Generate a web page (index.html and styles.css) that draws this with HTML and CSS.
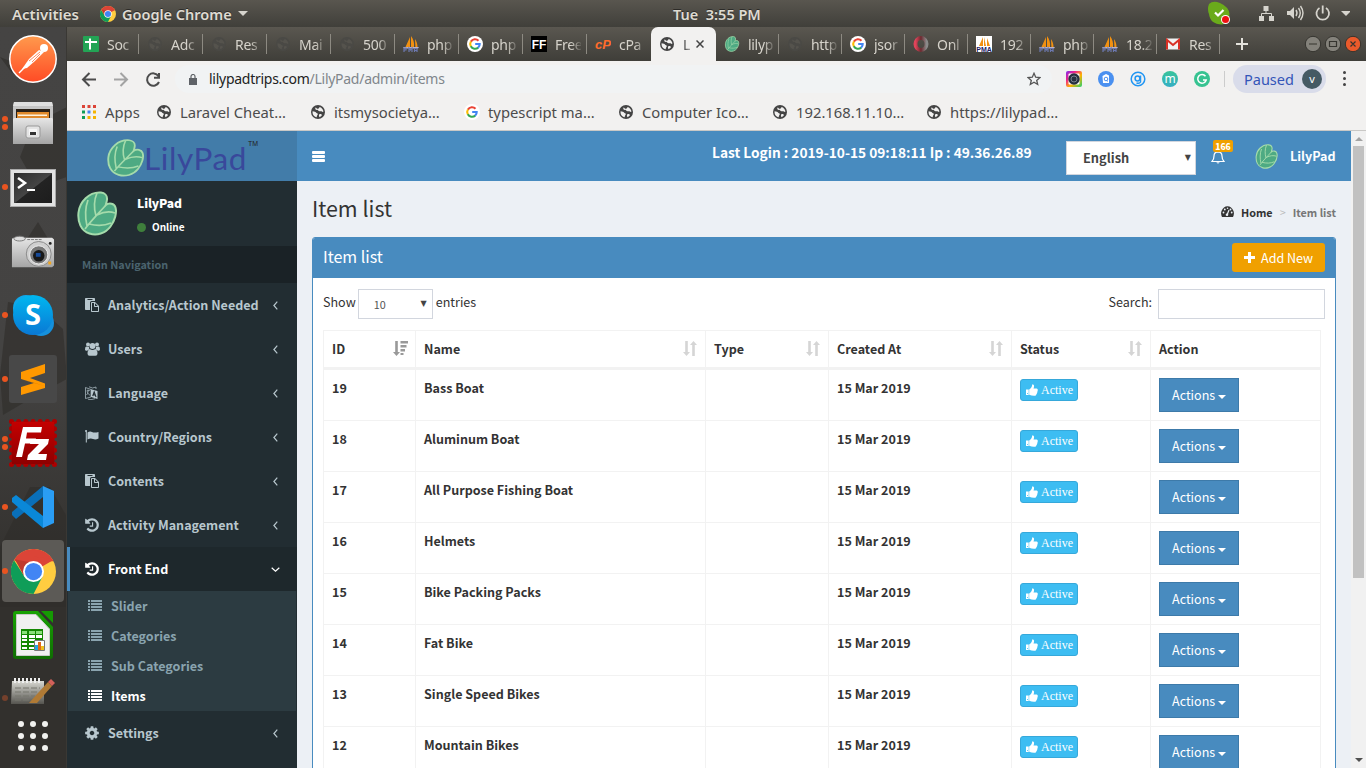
FILE: index.html
```html
<!DOCTYPE html>
<html lang="en">
<head>
<meta charset="utf-8">
<title>LilyPad | Item list</title>
<link rel="stylesheet" href="styles.css">
</head>
<body>
<svg class="defs" width="0" height="0">
  <defs>
    <linearGradient id="gPost" x2="0" y2="1"><stop stop-color="#ff9a4d"/><stop offset="1" stop-color="#ff4b25"/></linearGradient>
    <linearGradient id="gSky" x2="0" y2="1"><stop stop-color="#00b7f0"/><stop offset="1" stop-color="#0a78d4"/></linearGradient>
    <linearGradient id="gFz" x2="0" y2="1"><stop stop-color="#c40000"/><stop offset="1" stop-color="#8e0000"/></linearGradient>
    <linearGradient id="gMetal" x2="0" y2="1"><stop stop-color="#e6e6e6"/><stop offset="1" stop-color="#a5a5a5"/></linearGradient>
    <linearGradient id="gTerm" x2="1" y2="1"><stop stop-color="#2b2b2b"/><stop offset=".5" stop-color="#454545"/><stop offset=".52" stop-color="#232323"/><stop offset="1" stop-color="#1d1d1d"/></linearGradient>
    <linearGradient id="gLo" x2="0" y2="1"><stop stop-color="#18a303"/><stop offset="1" stop-color="#0f6d02"/></linearGradient>
    <linearGradient id="gNote" x2="0" y2="1"><stop stop-color="#d8d8d2"/><stop offset="1" stop-color="#55544f"/></linearGradient>
    <linearGradient id="gRing" x2="1"><stop stop-color="#e0445a"/><stop offset=".5" stop-color="#6b2a30"/><stop offset="1" stop-color="#8a8a8a"/></linearGradient>
    <linearGradient id="gCam" x2="1" y2="1"><stop stop-color="#7a2ff0"/><stop offset=".3" stop-color="#f0208c"/><stop offset=".6" stop-color="#ffb400"/><stop offset="1" stop-color="#20d070"/></linearGradient>
    <linearGradient id="gM" x2="0" y2="1"><stop stop-color="#38c49a"/><stop offset="1" stop-color="#35aec4"/></linearGradient>
  </defs>
  <symbol id="chrome" viewBox="0 0 48 48">
    <circle cx="24" cy="24" r="24" fill="#ffcd40"/>
    <path d="M24 24 3.2 12A24 24 0 0 1 44.8 12Z" fill="#db4437"/><path d="M24 13h21.3l-1-2L24 8Z" fill="#db4437"/>
    <path d="M3.2 12A24 24 0 0 0 24 48L33.5 29.5 24 24 14.5 29.5Z" fill="#0f9d58"/>
    <path d="M4 11 14 29 20 14Z" fill="#c13a2e"/>
    <circle cx="24" cy="24" r="11.2" fill="#fff"/><circle cx="24" cy="24" r="9.2" fill="#4285f4"/>
  </symbol>
  <symbol id="globe" viewBox="0 0 14 14">
    <circle cx="7" cy="7" r="7"/>
    <path d="M1.6 6.2c1.7.2 3 .4 3.4 1.3.4.9 1.8.5 1.8 1.6s-1 1.4-1.1 3.1C3 11.700 1.200 9.300 1.600 6.200ZM4.500 2.400c1.300.3 1 1.400 2.400 1.300 1.200 0 1-1.100 1.900-1.800 2 .8 3.600 2.800 3.600 4.900-1.100.5-1.500-.7-2.700-.6-1.400.1-2 .2-2.500-.6-.5-.9-1.300-.3-2-.8-.8-.5-1.200-1.300-.7-2.400ZM8.200 9.400c.8-.8 2.300-.3 2.900.7-.6 1.100-1.500 1.800-2.600 2.200-.4-1-.9-2.200-.3-2.900Z" class="cut"/>
  </symbol>
  <symbol id="google" viewBox="0 0 16 16">
    <circle cx="8" cy="8" r="8" fill="#fff"/>
    <g fill="none" stroke-width="2.100"><path d="M3.900 5.600A4.800 4.800 0 0 1 11.500 4.700" stroke="#ea4335"/><path d="M3.900 5.500A4.800 4.800 0 0 0 3.900 10.500" stroke="#fbbc05"/><path d="M3.800 10.300A4.800 4.800 0 0 0 11.200 11.600" stroke="#34a853"/><path d="M11.100 11.700A4.800 4.800 0 0 0 12.700 8H8.200" stroke="#4285f4"/></g>
  </symbol>
  <symbol id="leaf" viewBox="0 0 40 45">
    <path d="M24 1.500c3.500.5 6.500 3 6 7-.2 2.500-1 4-1.200 5.500 3.500-2.500 8.500-1.500 9.700 2.500 1.500 5-.5 13-5 19-5 7-14 9.500-21 7C4 40 .5 31 1.500 21.500 2.600 11 12 .5 24 1.500Z" fill="#4eaa83" stroke="#a5dbab" stroke-width="2"/>
    <path d="M8 38C13 31 20 24 29 14M10 35C8 26 8 17 11 9M19 25C17 18 17 9 20 2M12 33c8 2 15 2 22-1M20 24c6-3 12-4 18-2" fill="none" stroke="#a5dbab" stroke-width="1.700"/>
  </symbol>
  <symbol id="pma" viewBox="0 0 16 16">
    <path d="M7 1 2.500 11H7ZM8 0c2.500 3 3.500 7 3 11H8ZM12 3c1.800 2.500 2.500 5.500 2.500 8H12.400Z" fill="#f29111"/><path d="M0 11h16l-1 1.500H1Z" fill="#b9b3c9"/>
    <path d="M1 16v-4h2v2H1M6 16v-4l1.500 2L9 12v4M11.500 16v-3.500h2.500V16m-2.500-1.500H14" fill="none" stroke="#6c78af" stroke-width="1.200"/>
  </symbol>
  <symbol id="history" viewBox="0 0 1792 1792"><path d="M1664 896q0 156-61 298t-164 245-245 164-298 61q-172 0-327-72.500t-264-204.500q-7-10-6.500-22.500t8.500-20.500l137-138q10-9 25-9 16 2 23 12 73 95 179 147t225 52q104 0 198.500-40.500t163.500-109.500 109.500-163.500 40.500-198.500-40.500-198.500-109.500-163.500-163.500-109.500-198.500-40.500q-98 0-188 35.500t-160 101.500l137 138q31 30 14 69-17 40-59 40h-448q-26 0-45-19t-19-45v-448q0-42 40-59 39-17 69 14l130 129q107-101 244.500-156.500t284.500-55.500q156 0 298 61t245 164 164 245 61 298zm-640-288v448q0 14-9 23t-23 9h-320q-14 0-23-9t-9-23v-64q0-14 9-23t23-9h224v-352q0-14 9-23t23-9h64q14 0 23 9t9 23z"/></symbol>
  <symbol id="cog" viewBox="0 0 1792 1792"><path d="M1152 896q0-106-75-181t-181-75-181 75-75 181 75 181 181 75 181-75 75-181zm512-109v222q0 12-8 23t-20 13l-185 28q-19 54-39 91 35 50 107 138 10 12 10 25t-9 23q-27 37-99 108t-94 71q-12 0-26-9l-138-108q-44 23-91 38-16 136-29 186-7 28-36 28h-222q-14 0-24.500-8.500t-11.500-21.500l-28-184q-49-16-90-37l-141 107q-10 9-25 9-14 0-25-11-126-114-165-168-7-10-7-23 0-12 8-23 15-21 51-66.500t54-70.500q-27-50-41-99l-183-27q-13-2-21-12.500t-8-23.500v-222q0-12 8-23t19-13l186-28q14-46 39-92-40-57-107-138-10-12-10-24 0-10 9-23 26-36 98.500-107.500t94.500-71.500q13 0 26 10l138 107q44-23 91-38 16-136 29-186 7-28 36-28h222q14 0 24.500 8.500t11.500 21.500l28 184q49 16 90 37l142-107q9-9 24-9 13 0 25 10 129 119 165 170 7 8 7 22 0 12-8 23-15 21-51 66.500t-54 70.500q26 50 41 98l183 28q13 2 21 12.500t8 23.500z"/></symbol>
  <symbol id="paste" viewBox="0 0 14 14"><path d="M0 .8Q0 0 .8 0h8.400q.8 0 .8.800V3H6.500Q5 3 5 4.500V12H.8Q0 12 0 11.200ZM2.500 1v1h5V1Z" fill-rule="evenodd"/><path d="M6 4.800Q6 4 6.800 4H10l4 4v5.200q0 .8-.8.800H6.800Q6 14 6 13.200ZM7 5v8h6V9H9.800Q9 9 9 8.200V5Zm3 .3V8h2.700Z" fill-rule="evenodd"/></symbol>
  <symbol id="users" viewBox="0 0 15 14"><circle cx="3" cy="2.500" r="2"/><circle cx="12" cy="2.500" r="2"/><circle cx="7.500" cy="4" r="3"/><path d="M0 7.500Q0 4.500 1.300 4.500L4 5Q4 7 4.800 7.500 3 7.500 2.300 8.700H1Q0 8.600 0 7.500ZM15 7.500Q15 4.500 13.700 4.500L11 5Q11 7 10.200 7.500 12 7.500 12.700 8.700H14Q15 8.600 15 7.500ZM2.500 11.500Q2.500 7.500 5 7.200q2.500 1.500 5 0 2.500.3 2.500 4.300 0 2.300-2 2.300h-6Q2.500 13.800 2.500 11.500Z"/></symbol>
  <symbol id="lang" viewBox="0 0 13 14"><path d="M.5 1.500 6 3.500V11L.5 12.500ZM4 .8 7.500 2 11 1v2" fill="none" stroke="currentColor" stroke-width=".7"/><path d="M6 3.200 12.500 5v8L6 11Z"/><path d="M1.500 5 4.800 4.500M3 3.500V5Q3 8 1.500 9M2 6.500 5 9.300M3 13.200l3 .5 4-1" fill="none" stroke="currentColor" stroke-width=".7"/><path d="M7.700 10 9.200 5.800 11 11M8.200 8.600l2.300.5" fill="none" stroke="#222d32" stroke-width="1.100"/></symbol>
  <symbol id="flag" viewBox="0 0 14 13"><path d="M.3 1.200a1 1 0 1 1 1.500 0V12H.8V1.500ZM2.500 2Q5 .5 7 1.500t6.500 0V8Q10.500 9.700 8 8.500T2.500 9Z"/></symbol>
  <symbol id="list" viewBox="0 0 14 11"><path d="M0 0h2v2H0ZM3 0h11v2H3ZM0 3h2v2H0ZM3 3h11v2H3ZM0 6h2v2H0ZM3 6h11v2H3ZM0 9h2v2H0ZM3 9h11v2H3Z"/></symbol>
  <symbol id="chev" viewBox="0 0 5 9"><path d="M4.300.7.900 4.500l3.400 3.800" fill="none" stroke="currentColor" stroke-width="1.200"/></symbol>
  <symbol id="sort" viewBox="0 0 14 15"><path d="M2.200 0h2.600v11H7L3.500 15 0 11H2.200ZM9.200 15h2.600V4H14L10.500 0 7 4H9.200Z"/></symbol>
  <symbol id="sortdesc" viewBox="0 0 15 15"><path d="M2.200 0h2.600v11H7L3.500 15 0 11H2.200ZM7.500 0H15V2.500H7.500ZM7.500 4H13.500V6.500H7.500ZM7.500 8H12V10.500H7.500ZM7.500 12H10.500V14H7.500Z"/></symbol>
  <symbol id="thumb" viewBox="0 0 12 12"><path d="M0 5.500h2.700V11H0ZM3.200 5.500 5 4Q6 2.800 6.200.8 6.400 0 7.200.4 8.500 1 8 3L7.500 4.500h3.200Q12 4.700 11.700 5.800 11.900 6.800 11.400 7.400 11.600 8.300 11 9 11 10 10.300 10.400 10.200 11.600 8.800 11.700 6 11.900 3.200 10.800Z"/><path d="M1 9h.8v.9H1Z" fill="#3dbdf2"/></symbol>
</svg>

<header class="panel">
  <span class="act">Activities</span>
  <svg class="pchrome"><use href="#chrome"/></svg>
  <span class="app">Google Chrome</span><i class="tri"></i>
  <span class="clock">Tue&nbsp; 3:55 PM</span>
  <svg class="tray" viewBox="0 0 150 27">
    <path d="M9 4Q13 0 20 3q9 4 9.500 11Q29 22 22 24.500 10 24 9 14Q7 9 9 4Z" fill="#6aab1b"/><path d="m15 12.500 3 3 5.500-5.500" fill="none" stroke="#fff" stroke-width="2.200"/><circle cx="25.500" cy="19.500" r="4.500" fill="#fff"/><circle cx="25.500" cy="19.500" r="3.500" fill="#e11"/>
    <g fill="#d6d4cd"><path d="M63.500 6h5v5h-5ZM59 16h5v5h-5ZM69 16h5v5h-5Z"/><path d="M66 11v2.500M61.500 16v-2.500h10V16" fill="none" stroke="#d6d4cd"/>
    <path d="M87 11h3l4-4v12l-4-4h-3Z"/><path d="M96 10q2 3 0 6M98.500 8q3.500 5 0 10M100.500 6q5 7 0 14" fill="none" stroke="#d6d4cd" stroke-width="1.400"/>
    <path d="M119.500 8a6.300 6.300 0 1 0 6.500 0M122.700 5.500v8" fill="none" stroke="#d6d4cd" stroke-width="1.800"/><path d="M141 11h10l-5 5Z"/></g>
  </svg>
</header>

<div class="desk">
<aside class="dock">
  <svg class="wall" viewBox="0 0 67 741"><path d="M20 130 33 97 67 80v70l-30 10ZM0 30l20 8-8 8ZM25 215 38 195l12 20-6 8ZM8 275l30 5 25 22 4 50-30 16-34 20-3-40ZM30 460h20l17 30v90H0v-60Z" fill="#2f2d29" opacity=".6"/></svg>
  <div class="slot"><svg width="48" height="48" viewBox="0 0 48 48"><circle cx="24" cy="24" r="23.200" fill="url(#gPost)" stroke="#fff" stroke-width="1.500"/><path d="M13 34 20 24 30 15l5 2-9 9-8 7Z" fill="#fff"/><circle cx="35" cy="13" r="4" fill="#fff"/><path d="m20 26 11-9M23 27l8-8M11 37l7-7" stroke="#ff7038" stroke-width=".8"/><path d="m10 38 10-10" stroke="#fff" stroke-width="1.500"/></svg></div>
  <div class="slot"><i class="dot up"></i><i class="dot dn"></i><svg width="42" height="44" viewBox="0 0 42 44"><path d="M2 1h38l1 5v12H1V6Z" fill="#c4c4c4"/><path d="M2 1h38l1 4H1Z" fill="#dedede"/><path d="M4 8h34v10H4Z" fill="#2a2118"/><path d="M5 11h32v7H5Z" fill="#e08a2c"/><path d="M6 13.500h29v1.500H6Z" fill="#fff2dc"/><path d="M2 17h38l1 1v25H1V18Z" fill="url(#gMetal)"/><rect x="14" y="25" width="14" height="12" rx="2" fill="#e4e4e4" stroke="#999"/><path d="M17 28h8v6h-8Z" fill="#f6f6f6"/><path d="M18 31h6v3h-6Z" fill="#333"/></svg></div>
  <div class="slot"><i class="dot"></i><svg class="term" width="46" height="38" viewBox="0 0 46 38"><rect x=".5" y=".5" width="45" height="37" fill="#e2e2e2" stroke="#aaa"/><path d="M4 4h38v30H4Z" fill="url(#gTerm)"/><path d="m8 9 7 5-7 5" fill="none" stroke="#fff" stroke-width="2.500"/><path d="M17 21h8" stroke="#fff" stroke-width="2"/></svg></div>
  <div class="slot"><svg class="term" width="44" height="34" viewBox="0 0 46 34"><path d="M1 4Q1 2 3 2h40l2 2v27l-2 2H1Z" fill="url(#gMetal)"/><ellipse cx="9" cy="3" rx="6" ry="2.500" fill="#ddd" stroke="#777"/><path d="M17 4h16" stroke="#777" stroke-dasharray="3 1"/><circle cx="29" cy="19" r="13" fill="#cfcfcf" stroke="#888"/><circle cx="29" cy="20" r="9.500" fill="#777" stroke="#eee"/><circle cx="29" cy="21" r="6" fill="#181818"/><path d="M26 18h5v4h-5Z" fill="#174a98"/><path d="M39 27h3v3h-3Z" fill="#f3a61d"/><circle cx="41" cy="8" r="1.500" fill="#222"/></svg></div>
  <div class="slot"><i class="dot"></i><svg width="44" height="44" viewBox="0 0 44 44"><circle cx="15" cy="15" r="13" fill="#10a8ea"/><circle cx="30" cy="30" r="13" fill="#1590dc"/><circle cx="22" cy="22" r="20" fill="url(#gSky)"/><text x="22" y="32" class="sky">S</text></svg></div>
  <div class="slot"><i class="dot"></i><div class="subl"><svg width="24" height="33" viewBox="0 0 24 33"><path d="M0 9 24 1v9L9 15l15 5.500V25L0 32v-8l13-4L0 16Z" fill="#ff9800"/><path d="M0 16.500 24 23 14 20Z" fill="#c87500"/></svg></div></div>
  <div class="slot"><i class="dot up"></i><i class="dot dn"></i><svg width="48" height="48" viewBox="0 0 48 48"><rect x="2.500" y="2.500" width="43" height="43" fill="url(#gFz)" stroke="#ad0000" stroke-width="5" stroke-linecap="round" stroke-dasharray="0 7.170"/><rect x="3" y="3" width="42" height="42" fill="url(#gFz)"/><path d="M14 8h19l-1 5.500H18l-1 6h10l-1 5H16l-3 13.500H7Z" fill="#fff"/><path d="M22 20h18l-1 5-10 10h9l-1 6H18l1-5 11-11H21Z" fill="#fff"/></svg></div>
  <div class="slot"><i class="dot"></i><svg width="44" height="44" viewBox="0 0 44 44"><path d="M32 1 43 6v32l-11 5Z" fill="#2a9df4"/><path d="M32 1v11L5 34 1 30v-3Z" fill="#0a6fb8"/><path d="M32 43V31L5 10l-4 3v4Z" fill="#0a88d8"/></svg></div>
  <div class="slot"><i class="dot"></i><div class="cur"><svg width="45" height="45"><use href="#chrome"/></svg></div></div>
  <div class="slot"><svg width="40" height="48" viewBox="0 0 40 48"><path d="M3 0h22l15 16v29q0 3-3 3H3q-3 0-3-3V3Q0 0 3 0Z" fill="url(#gLo)"/><path d="M28 0h12v12Z" fill="#159a03"/><path d="M3.500 3.500H23L36.500 18v26.500h-33Z" fill="#f0f0f0" stroke="#c9c9c9"/><path d="M8 18h22v21H8Z" fill="#148703"/><path d="M9 20h5v3H9ZM16 20h6v3H16ZM23 20h6v3H23Z" fill="#8be07c"/><path d="M9 24h5v3H9ZM16 24h6v3H16ZM23 24h6v3H23ZM9 28h5v2H9ZM16 28h6v2H16ZM9 32h5v2H9ZM16 32h5v2H16ZM9 36h5v2H9ZM16 36h5v2H16Z" fill="#fff"/><path d="M21.500 29.500h10v10h-10Z" fill="#fff" stroke="#777"/><path d="M22 34h3v5h-3Z" fill="#2aa4e0"/><path d="M25 31h3v8h-3Z" fill="#e06a1c"/><path d="M28 35h3v4h-3Z" fill="#f0c020"/></svg></div>
  <div class="slot note"><i class="dot"></i><svg width="46" height="26" viewBox="0 0 46 26"><path d="M2 3h32v23H1Z" fill="url(#gNote)"/><path d="M5 0v5M9 0v5M13 0v5M17 0v5M21 0v5M25 0v5M29 0v5" stroke="#eee" stroke-width="2"/><path d="M5 10h25M5 14h22M5 18h20M5 22h16" stroke="#77766f" stroke-dasharray="6 2"/><path d="m38 4 4 4-15 17h-8Z" fill="#b07a35"/><path d="m38 4 3-3 4 4-3 3Z" fill="#d2605a"/></svg></div>
  <div class="apps"><i></i><i></i><i></i><i></i><i></i><i></i><i></i><i></i><i></i></div>
</aside>

<div class="browser">
  <div class="tabs">
    <div class="tab"><svg viewBox="0 0 16 16"><rect width="16" height="16" rx="1" fill="#23a455"/><path d="M2 6h12M7 2.500v11" stroke="#fff" stroke-width="2"/></svg><span>Soc</span></div>
    <div class="tab"><svg class="dim" viewBox="0 0 14 14"><use href="#globe"/></svg><span>Adc</span></div>
    <div class="tab"><svg class="dim" viewBox="0 0 14 14"><use href="#globe"/></svg><span>Res</span></div>
    <div class="tab"><svg class="dim" viewBox="0 0 14 14"><use href="#globe"/></svg><span>Mai</span></div>
    <div class="tab"><svg class="dim" viewBox="0 0 14 14"><use href="#globe"/></svg><span>500</span></div>
    <div class="tab"><svg><use href="#pma"/></svg><span>php</span></div>
    <div class="tab"><svg><use href="#google"/></svg><span>php</span></div>
    <div class="tab"><svg viewBox="0 0 16 16"><path d="M0 0h16v16H0Z"/><text x="8" y="13" class="ff">FF</text></svg><span>Free</span></div>
    <div class="tab nosep"><svg viewBox="0 0 16 16"><text x="8" y="12.500" class="cp">cP</text></svg><span>cPa</span></div>
    <div class="tab on"><svg class="g14" viewBox="0 0 14 14"><use href="#globe"/></svg><span>L</span><svg class="x" viewBox="0 0 8 8"><path d="m.5.5 7 7m0-7-7 7" stroke="#444" stroke-width="1.500"/></svg></div>
    <div class="tab b"><svg><use href="#leaf"/></svg><span>lilyp</span></div>
    <div class="tab b"><svg class="dim" viewBox="0 0 14 14"><use href="#globe"/></svg><span>http</span></div>
    <div class="tab b"><svg><use href="#google"/></svg><span>jsor</span></div>
    <div class="tab b"><svg viewBox="0 0 16 16"><ellipse cx="8" cy="8" rx="5.500" ry="6" fill="none" stroke="url(#gRing)" stroke-width="4"/></svg><span>Onl</span></div>
    <div class="tab b"><svg viewBox="0 0 16 16"><path d="M0 0h16v16H0Z" fill="#fff"/><path d="M7 1 3 10h4ZM8 1l2 9H8ZM11 2l3 8h-3Z" fill="#f29111"/><text x="8" y="16" class="pm">PMA</text></svg><span>192</span></div>
    <div class="tab b"><svg><use href="#pma"/></svg><span>php</span></div>
    <div class="tab b"><svg><use href="#pma"/></svg><span>18.2</span></div>
    <div class="tab b"><svg viewBox="0 0 16 16"><path d="M1 2.500h14v11H1Z" fill="#f2f2f2"/><path d="M2 13.500V4l6 5 6-5v9.500" fill="none" stroke="#d93025" stroke-width="2"/></svg><span>Res</span></div>
    <svg class="wctl" viewBox="0 0 147 34"><path d="M17 17h12M23 11v12" stroke="#e4e2dc" stroke-width="2"/><g stroke="#35342f"><circle cx="94" cy="17" r="7.700" fill="#84827b"/><circle cx="114" cy="17" r="7.700" fill="#84827b"/><circle cx="134" cy="17" r="7.700" fill="#ea5a2b"/><path d="M90 17h8M110.500 14.500h7v5h-7ZM131.500 14.500l5 5m0-5-5 5" fill="none" stroke-width="1.200"/></g></svg>
  </div>

  <div class="bar">
    <svg class="nav" viewBox="0 0 108 34" fill="none" stroke-width="2"><path d="M29 17.500H16.500m6-6.500L16 17.500l6.500 6.500" stroke="#4c4c4c"/><path d="M47 17.500h12.500m-6-6.500 6.500 6.500-6.500 6.500" stroke="#a3a3a3"/><path d="M91.500 14.200A6.200 6.200 0 1 0 92 20M92 11v4.800H87" stroke="#4c4c4c"/></svg>
    <div class="omni"><svg class="lock" viewBox="0 0 8 11"><path d="M0 4h8v7H0Z" fill="#5f6368"/><path d="M2 4V2.500a2 2 0 0 1 4 0V4" fill="none" stroke="#5f6368" stroke-width="1.200"/></svg><span class="url"><b>lilypadtrips.com</b>/LilyPad/admin/items</span>
      <svg class="star" viewBox="0 0 14 14"><path d="m7 1.300 1.700 3.900 4.200.4-3.200 2.800 1 4.100L7 10.300l-3.700 2.200 1-4.100L1.100 5.600l4.200-.4Z" fill="none" stroke="#555" stroke-width="1.300"/></svg></div>
    <div class="exts">
      <svg viewBox="0 0 16 16"><rect width="16" height="16" rx="2" fill="url(#gCam)"/><rect x="2.500" y="2.500" width="11" height="11" rx="1" fill="#fff"/><circle cx="8" cy="8" r="5.700" fill="#263040"/><circle cx="8" cy="8" r="3" fill="none" stroke="#78828f"/></svg>
      <svg viewBox="0 0 16 16"><circle cx="8" cy="8" r="8" fill="#4a90f0"/><path d="M4.500 5 8 3l3 1.500V12H5Z" fill="#fff"/><circle cx="8" cy="8" r="1.800" fill="none" stroke="#4a90f0"/><path d="m8.500 9 1 1.500" stroke="#4a90f0"/></svg>
      <svg viewBox="0 0 16 16"><g fill="none" stroke="#2196f3" stroke-width="1.500"><circle cx="8" cy="8" r="6.800"/><circle cx="7.500" cy="7.500" r="2.400"/><path d="M10.500 4.500V11q-1 2-4 1"/></g></svg>
      <svg viewBox="0 0 16 16"><circle cx="8" cy="8" r="8" fill="url(#gM)"/><text x="8" y="11.500" class="em">m</text></svg>
      <svg viewBox="0 0 16 16"><circle cx="8" cy="8" r="8" fill="#37c391"/><path d="M11.500 5.300A4.300 4.300 0 1 0 12.200 9H9" fill="none" stroke="#fff" stroke-width="1.500"/></svg>
    </div>
    <div class="paused">Paused<i>v</i></div>
    <div class="kebab"><i></i><i></i><i></i></div>
  </div>

  <div class="marks">
    <span style="width:75px"><svg viewBox="0 0 14 14"><path d="M0 0h3v3H0ZM5.500 0h3v3h-3ZM11 0h3v3h-3Z" fill="#db4437"/><path d="M0 5.500h3v3H0Z" fill="#0f9d58"/><path d="M5.500 5.500h3v3h-3Z" fill="#4285f4"/><path d="M11 5.500h3v3h-3ZM5.500 11h3v3h-3ZM11 11h3v3h-3Z" fill="#f4b400"/><path d="M0 11h3v3H0Z" fill="#0f9d58"/></svg><em class="wa">Apps</em></span>
    <span><svg><use href="#globe"/></svg><em>Laravel Cheat…</em></span>
    <span><svg><use href="#globe"/></svg><em>itsmysocietya…</em></span>
    <span><svg class="gg"><use href="#google"/></svg><em>typescript ma…</em></span>
    <span><svg><use href="#globe"/></svg><em>Computer Ico…</em></span>
    <span><svg><use href="#globe"/></svg><em>192.168.11.10…</em></span>
    <span><svg><use href="#globe"/></svg><em>https://lilypad…</em></span>
  </div>

  <div class="page">
    <nav class="side">
      <div class="logo"><svg class="lf" viewBox="0 0 40 45" preserveAspectRatio="none"><use href="#leaf"/></svg><span>LilyPad</span><sup>TM</sup></div>
      <div class="user"><svg width="40" height="45"><use href="#leaf"/></svg><div><strong>LilyPad</strong><small><i></i>Online</small></div></div>
      <div class="head">Main Navigation</div>
      <a class="item"><svg><use href="#paste"/></svg><span>Analytics/Action Needed</span><svg class="ch"><use href="#chev"/></svg></a>
      <a class="item"><svg class="w15"><use href="#users"/></svg><span>Users</span><svg class="ch"><use href="#chev"/></svg></a>
      <a class="item"><svg class="w13"><use href="#lang"/></svg><span>Language</span><svg class="ch"><use href="#chev"/></svg></a>
      <a class="item"><svg><use href="#flag"/></svg><span>Country/Regions</span><svg class="ch"><use href="#chev"/></svg></a>
      <a class="item"><svg><use href="#paste"/></svg><span>Contents</span><svg class="ch"><use href="#chev"/></svg></a>
      <a class="item"><svg class="fa"><use href="#history"/></svg><span>Activity Management</span><svg class="ch"><use href="#chev"/></svg></a>
      <a class="item on"><svg class="fa"><use href="#history"/></svg><span>Front End</span><svg class="ch dn"><use href="#chev"/></svg></a>
      <div class="sub">
        <a><svg><use href="#list"/></svg><span>Slider</span></a>
        <a><svg><use href="#list"/></svg><span>Categories</span></a>
        <a><svg><use href="#list"/></svg><span>Sub Categories</span></a>
        <a class="on"><svg><use href="#list"/></svg><span>Items</span></a>
      </div>
      <a class="item"><svg class="fa"><use href="#cog"/></svg><span>Settings</span><svg class="ch"><use href="#chev"/></svg></a>
    </nav>

    <main class="main">
      <div class="top">
        <div class="burger"><i></i><i></i><i></i></div>
        <span class="login">Last Login : 2019-10-15 09:18:11 Ip : 49.36.26.89</span>
        <div class="lang">English<i>▼</i></div>
        <div class="bell"><svg viewBox="0 0 14 14"><path d="M1 11.500Q3 9.500 3 6 3 2 7 1.800 11 2 11 6q0 3.500 2 5.500Z" fill="none" stroke="#fff" stroke-width="1.200"/><path d="M5.500 12Q7 14.500 8.500 12M7 .5V2" stroke="#fff" fill="none"/></svg><b>166</b></div>
        <svg class="av"><use href="#leaf"/></svg><span class="me">LilyPad</span>
      </div>
      <div class="crumbs"><h1>Item list</h1><svg viewBox="0 0 13 11"><path d="M1 11Q-.5 8 .5 5 2.500.3 6.500.3T12.500 5q1 3-.5 6Z" fill="#333"/><path d="m6 9 2-5" stroke="#ecf0f5" stroke-width="1.200"/><g fill="#ecf0f5"><circle cx="2.500" cy="6.500" r=".9"/><circle cx="3.800" cy="3.500" r=".9"/><circle cx="6.500" cy="2.200" r=".8"/><circle cx="9.500" cy="3.500" r=".9"/><circle cx="10.700" cy="6.500" r=".9"/><circle cx="6" cy="8.700" r="1.300"/></g></svg><b>Home</b><i>&gt;</i><span>Item list</span></div>
      <section class="box">
        <div class="bh"><h3>Item list</h3><button><svg viewBox="0 0 11 11"><path d="M4 0h3v4h4v3H7v4H4V7H0V4h4Z"/></svg><span>Add New</span></button></div>
        <div class="bb">
          <div class="ctl"><span>Show</span><div class="sel">10<i>▼</i></div><span>entries</span><span class="se">Search:</span><input type="text"></div>
          <div class="grid">
            <div class="r th"><b>ID<svg class="d"><use href="#sortdesc"/></svg></b><b>Name<svg><use href="#sort"/></svg></b><b>Type<svg><use href="#sort"/></svg></b><b>Created At<svg><use href="#sort"/></svg></b><b>Status<svg><use href="#sort"/></svg></b><b>Action</b></div>
            <div class="r"><b>19</b><b>Bass Boat</b><b></b><b>15 Mar 2019</b><div><span class="ok"><svg><use href="#thumb"/></svg>Active</span></div><div><span class="ac">Actions<i></i></span></div></div>
            <div class="r"><b>18</b><b>Aluminum Boat</b><b></b><b>15 Mar 2019</b><div><span class="ok"><svg><use href="#thumb"/></svg>Active</span></div><div><span class="ac">Actions<i></i></span></div></div>
            <div class="r"><b>17</b><b>All Purpose Fishing Boat</b><b></b><b>15 Mar 2019</b><div><span class="ok"><svg><use href="#thumb"/></svg>Active</span></div><div><span class="ac">Actions<i></i></span></div></div>
            <div class="r"><b>16</b><b>Helmets</b><b></b><b>15 Mar 2019</b><div><span class="ok"><svg><use href="#thumb"/></svg>Active</span></div><div><span class="ac">Actions<i></i></span></div></div>
            <div class="r"><b>15</b><b>Bike Packing Packs</b><b></b><b>15 Mar 2019</b><div><span class="ok"><svg><use href="#thumb"/></svg>Active</span></div><div><span class="ac">Actions<i></i></span></div></div>
            <div class="r"><b>14</b><b>Fat Bike</b><b></b><b>15 Mar 2019</b><div><span class="ok"><svg><use href="#thumb"/></svg>Active</span></div><div><span class="ac">Actions<i></i></span></div></div>
            <div class="r"><b>13</b><b>Single Speed Bikes</b><b></b><b>15 Mar 2019</b><div><span class="ok"><svg><use href="#thumb"/></svg>Active</span></div><div><span class="ac">Actions<i></i></span></div></div>
            <div class="r"><b>12</b><b>Mountain Bikes</b><b></b><b>15 Mar 2019</b><div><span class="ok"><svg><use href="#thumb"/></svg>Active</span></div><div><span class="ac">Actions<i></i></span></div></div>
          </div>
        </div>
      </section>
    </main>
    <div class="scroll"><i class="u"></i><div></div><i class="d"></i></div>
  </div>
</div>
</div>
</body>
</html>
```
FILE: styles.css
```css
* { box-sizing: border-box; }
body { margin: 0; width: 1366px; height: 768px; overflow: hidden; background: #33312d; font-family: "Noto Sans CJK SC", "Noto Sans", sans-serif; font-size: 12.550px; color: #333; }
svg { flex: none; display: block; }
i, em { font-style: normal; }
.defs { position: absolute; }

.panel { height: 27px; display: flex; align-items: center; background: linear-gradient(#59564f, #403f3a); color: #dfdbd2; font: 600 14.500px "Noto Sans", sans-serif; position: relative; text-shadow: 0 -1px 0 #2c2b28; }
.act { margin-left: 12px; width: 88px; white-space: nowrap; font-size: 15px; }
.pchrome { width: 16px; height: 16px; }
.app { margin-left: 6px; width: 111px; white-space: nowrap; }
.tri { margin-left: 5px; border: 5px solid transparent; border-top-color: #d6d4cd; border-bottom: 0; }
.clock { margin-left: 425px; white-space: nowrap; width: 90px; }
.tray { width: 150px; height: 27px; margin-left: auto; margin-right: 16px; }

.desk { display: flex; height: 741px; }
.dock { width: 67px; position: relative; background: linear-gradient(#454443, #444342 45%, #32302d 75%); display: flex; flex-direction: column; overflow: hidden; border-right: 1px solid #3a3834; }
.wall { position: absolute; left: 0; top: 0; width: 67px; height: 741px; }
.slot { height: 64px; display: flex; align-items: center; justify-content: center; position: relative; }
.term { margin-top: 2px; }
.dot { position: absolute; left: 2px; top: 29px; width: 6px; height: 6px; border-radius: 50%; background: #e95420; }
.dot.up { top: 25px; } .dot.dn { top: 33px; }
.sky { font: bold 29px "Open Sans", sans-serif; fill: #fff; text-anchor: middle; }
.subl { width: 48px; height: 48px; background: #484848; border-radius: 3px; display: flex; align-items: center; justify-content: center; }
.cur { width: 62px; height: 62px; border-radius: 4px; background: #5c5a56; display: flex; align-items: center; justify-content: center; }
.note { height: 37px; padding-top: 11px; }
.note .dot { top: 28px; background: #74402c; }
.apps { display: grid; grid-template-columns: repeat(3, 6px); gap: 6px; padding: 17px 0 0 18px; }
.apps i { width: 6px; height: 6px; border-radius: 50%; background: #f2f2f0; }

.browser { flex: 1; min-width: 0; }
.tabs { height: 34px; display: flex; background: linear-gradient(#5a5750, #3f3e39); padding-left: 8px; font: 14px "Noto Sans", sans-serif; color: #d6d3cb; }
.tab { width: 64px; height: 34px; padding: 0 5px 0 8px; display: flex; align-items: center; position: relative; flex: none; }
.tab::after { content: ""; position: absolute; right: 0; top: 7px; height: 20px; width: 1px; background: #8d8a82; }
.tab.nosep::after, .tab.on::after { display: none; }
.tab.b { width: 63px; }
.tab svg { width: 16px; height: 16px; }
.tab span { margin-left: 8px; white-space: nowrap; width: 26px; letter-spacing: -.3px; -webkit-mask-image: linear-gradient(90deg, #000 60%, rgba(0,0,0,.15)); }
.tab svg.dim { fill: #4a4945; --cut: #55534d; width: 14px; height: 14px; margin: 0 1px; }
.cut { fill: var(--cut, #f2f1f0); }
.tab.on { width: 65px; background: #f2f1f0; border-radius: 7px 7px 0 0; color: #333; padding-left: 9px; }
.tab.on svg { width: 14px; height: 14px; fill: #444; }
.tab.on span { width: 8px; margin-left: 9px; -webkit-mask-image: linear-gradient(90deg, #000, rgba(0,0,0,.3)); }
.tab.on svg.x { width: 8px; height: 8px; margin-left: 5px; }
.ff { font: bold 12px "Liberation Sans"; fill: #fff; text-anchor: middle; }
.cp { font: italic bold 13px "Liberation Sans"; fill: #ff6c2c; text-anchor: middle; }
.pm { font: bold 7px "Liberation Sans"; fill: #226; text-anchor: middle; }
.wctl { width: 147px; height: 34px; margin-left: -1px; }

.bar { height: 35px; background: #f2f1f0; display: flex; align-items: center; font-family: "Noto Sans", sans-serif; }
.nav { width: 108px; height: 34px; }
.omni { width: 877px; height: 28px; border-radius: 14px; background: #f1f3f4; display: flex; align-items: center; margin-top: 1px; padding: 0 11px 0 14px; }
.lock { width: 8px; height: 11px; }
.url { margin: -2px 0 0 12px; font-size: 14px; color: #80868b; letter-spacing: -.27px; }
.url b { font-weight: 400; color: #222; }
.star { width: 14px; height: 14px; margin-left: auto; }
.exts { display: flex; gap: 16px; margin-left: 14px; }
.exts svg { width: 16px; height: 16px; }
.em { font: 12px "Noto Sans"; fill: #fff; text-anchor: middle; }
.paused { margin-left: 23px; width: 93px; height: 28px; border-radius: 14px; background: #d9dcea; color: #3355b8; font-size: 14.500px; line-height: 26px; display: flex; align-items: center; justify-content: space-between; padding: 0 4px 0 11px; position: relative; }
.paused::before { content: ""; position: absolute; left: -9px; top: 6px; height: 16px; width: 1px; background: #ccc; }
.paused i { width: 20px; height: 20px; border-radius: 50%; background: #455a64; color: #fff; font-size: 11px; line-height: 19px; text-align: center; }
.kebab { display: grid; gap: 3px; margin-left: 17px; }
.kebab i { width: 3px; height: 3px; border-radius: 50%; background: #444; }

.marks { height: 35px; background: #f2f1f0; border-bottom: 1px solid #c9c8c6; display: flex; align-items: center; padding: 0 0 2px 15px; font: 14.800px "Noto Sans", sans-serif; color: #4c4c4c; }
.marks span { width: 154px; display: flex; align-items: center; }
.marks svg { width: 14px; height: 14px; fill: #444; margin-right: 9px; }
.marks svg.gg { width: 16px; height: 16px; margin: 0 8px 0 -1px; }
.marks em { white-space: nowrap; margin-top: -1px; }

.page { height: 637px; display: flex; overflow: hidden; background: #ecf0f5; }
.side { width: 230px; background: #222d32; color: #b8c7ce; font-weight: 700; }
.logo { height: 50px; background: #427ca9; display: flex; align-items: center; padding-left: 40px; }
.lf { width: 37px; height: 38px; margin-top: 4px; }
.logo span { font: 400 31.500px Lato, sans-serif; color: #39489b; letter-spacing: .6px; margin-top: 4px; width: 104px; }
.logo sup { font: 7px "Liberation Sans"; color: #222; margin: -26px 0 0 0; }
.user { height: 65px; display: flex; padding: 10px; color: #fff; }
.user div { margin-left: 20px; }
.user strong { display: block; line-height: 24px; font-size: 12.100px; letter-spacing: -.1px; }
.user small { display: flex; align-items: center; font-size: 10px; line-height: 24px; }
.user small i { width: 9px; height: 9px; border-radius: 50%; background: #3f7f3c; margin-right: 6px; }
.head { height: 37px; line-height: 36px; background: #1a2226; color: #4b646f; font-size: 10.800px; padding-left: 15px; }
.item { height: 44px; display: flex; align-items: center; padding: 0 18px; }
.item svg { width: 14px; height: 14px; fill: currentColor; }
.item svg.w15 { width: 15px; } .item svg.w13 { width: 13px; }
.item svg.fa { width: 16px; height: 16px; margin: 0 -1px; }
.item svg + span { margin: -2px 0 0 9px; }
.item svg.w15 + span { margin-left: 8px; } .item svg.w13 + span { margin-left: 10px; }
.item svg.ch { width: 5px; height: 9px; margin: 0 1px 0 auto; }
.item svg.dn { transform: rotate(-90deg); margin-right: 1px; }
.item.on { background: #1e282c; color: #fff; border-left: 3px solid #488bbf; padding-left: 15px; }
.sub { background: #2c3b41; margin: 0 1px; color: #8aa4af; }
.sub a { height: 30px; display: flex; align-items: center; padding-left: 20px; }
.sub a span { margin-top: -2px; }
.sub .on { color: #fff; }
.sub svg { width: 14px; height: 11px; fill: currentColor; margin: -1px 9px 0 0; }

.main { flex: 1; min-width: 0; }
.top { height: 50px; background: #488bbf; display: flex; color: #fff; font-weight: 700; padding-left: 15px; }
.burger { display: grid; gap: 1px; align-content: start; padding-top: 20px; width: 13px; }
.burger i { height: 3px; background: #fff; border-radius: 1px; }
.login { margin-left: 387px; width: 354px; line-height: 43px; white-space: nowrap; font-size: 13.700px; }
.lang { width: 130px; height: 34px; margin-top: 10px; background: #fff; border: 1px solid #d2d6de; color: #444; padding: 0 4px 0 16px; line-height: 31px; display: flex; justify-content: space-between; font-size: 12.800px; }
.lang i, .sel i { font: 8px/31px "DejaVu Sans"; color: #444; }
.bell { position: relative; margin: 19px 0 0 15px; width: 14px; }
.bell svg { width: 14px; height: 14px; }
.bell b { position: absolute; left: 2px; top: -10px; background: #f0a000; font-size: 8.500px; line-height: 12px; width: 20px; height: 12px; text-align: center; border-radius: 2px; }
.av { width: 25px; height: 25px; margin: 13px 0 0 29px; }
.me { margin-left: 11px; line-height: 49px; }
.crumbs { height: 56px; display: flex; align-items: center; padding: 5px 15px 0; font-size: 10.800px; }
.crumbs h1 { margin: -9px auto 0 0; font-weight: 400; font-size: 21.400px; }
.crumbs svg { width: 13px; height: 11px; margin-right: 7px; }
.crumbs i { color: #bbb; margin: 0 7px; }
.crumbs span { color: #777; font-weight: 700; }
.box { margin: 0 15px; border: 1px solid #488bbf; border-radius: 3px 3px 0 0; background: #fff; height: 560px; overflow: hidden; }
.bh { height: 40px; background: #488bbf; color: #fff; display: flex; align-items: center; justify-content: space-between; padding: 0 10px 1px; }
.bh h3 { margin: -3px 0 0; font-size: 16px; font-weight: 400; }
.bh button { width: 93px; height: 29px; border: 0; border-radius: 3px; background: #f0a000; color: #fff; font: inherit; display: flex; align-items: center; padding: 0 0 0 12px; margin-top: -1px; }
.bh button svg { width: 11px; height: 11px; fill: #fff; margin-right: 6px; }
.bb { padding: 11px 10px; }
.ctl { display: flex; height: 30px; line-height: 25px; }
.sel { width: 75px; height: 30px; border: 1px solid #d2d6de; margin: 0 3px 0 2px; padding: 0 5px 0 15px; font-size: 10.800px; line-height: 29px; display: flex; justify-content: space-between; color: #555; }
.sel i { line-height: 27px; }
.se { margin-left: auto; }
.ctl input { width: 167px; height: 30px; border: 1px solid #d2d6de; margin-left: 6px; background: #fff; }
.grid { width: 998px; margin-top: 11px; border-left: 1px solid #f2f2f2; border-top: 1px solid #f2f2f2; }
.r { display: grid; grid-template-columns: 92px 290px 123px 183px 139px 170px; height: 51px; }
.r > * { border-right: 1px solid #f2f2f2; border-bottom: 1px solid #f2f2f2; padding: 8px 8px 0; line-height: 20px; }
.r.th { height: 39px; }
.r.th > * { border-bottom-width: 3px; line-height: 20px; display: flex; justify-content: space-between; }
.th svg { width: 14px; height: 15px; fill: #d5d5d5; margin: 2px 0 0 0; }
.th svg.d { width: 15px; fill: #999; margin-right: -1px; }
.ok { display: flex; width: 58px; height: 22px; margin-top: 1px; border: 1px solid #36a8da; border-radius: 3px; background: #3dbdf2; color: #fff; font: 12px/20px "Liberation Serif", serif; padding-left: 5px; }
.ok svg { width: 12px; height: 12px; fill: #fff; margin: 4px 3px 0 0; }
.ac { display: flex; align-items: center; width: 80px; height: 34px; background: #488bbf; border: 1px solid #3d7aa9; color: #fff; padding-left: 12px; }
.ac i { border: 4px solid transparent; border-top-color: #fff; border-bottom: 0; margin: 3px 0 0 3px; }
.scroll { width: 15px; background: #f1f1f1; display: flex; flex-direction: column; align-items: center; }
.scroll div { width: 11px; height: 432px; background: #c1c1c1; }
.scroll i { border: 4px solid transparent; }
.scroll .u { border-bottom-color: #a3a3a3; border-top: 0; margin: 6px 0 5px; }
.scroll .d { border-top-color: #505050; border-bottom: 0; margin-top: auto; margin-bottom: 6px; }
```
